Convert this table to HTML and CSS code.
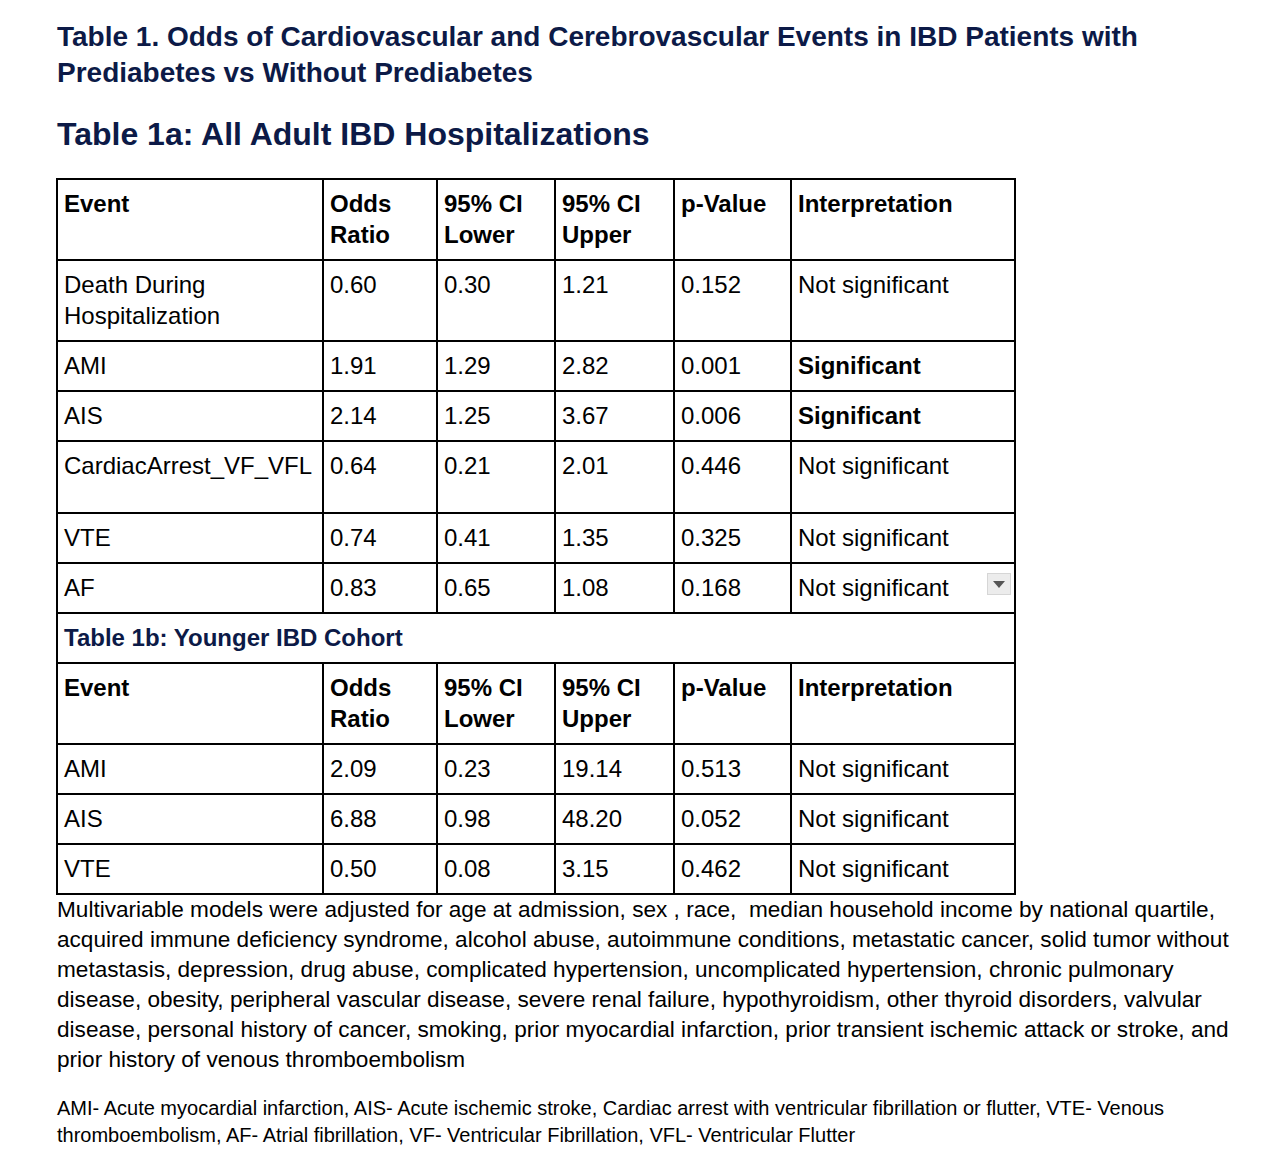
FILE: index.html
```
<!DOCTYPE html>
<html lang="en">
<head>
<meta charset="utf-8">
<title>Table 1</title>
<link rel="stylesheet" href="styles.css">
</head>
<body>
<div class="page">
  <h1 class="title">Table 1. Odds of Cardiovascular and Cerebrovascular Events in IBD Patients with Prediabetes vs Without Prediabetes</h1>
  <h2 class="subtitle">Table 1a: All Adult IBD Hospitalizations</h2>
  <div class="table-wrap">
    <table class="data">
      <colgroup>
        <col class="c1"><col class="c2"><col class="c3"><col class="c4"><col class="c5"><col class="c6">
      </colgroup>
      <tr class="head">
        <th>Event</th><th>Odds Ratio</th><th>95% CI Lower</th><th>95% CI Upper</th><th>p-Value</th><th>Interpretation</th>
      </tr>
      <tr><td>Death During Hospitalization</td><td>0.60</td><td>0.30</td><td>1.21</td><td>0.152</td><td>Not significant</td></tr>
      <tr><td>AMI</td><td>1.91</td><td>1.29</td><td>2.82</td><td>0.001</td><td class="sig">Significant</td></tr>
      <tr><td>AIS</td><td>2.14</td><td>1.25</td><td>3.67</td><td>0.006</td><td class="sig">Significant</td></tr>
      <tr class="tall"><td>CardiacArrest_VF_VFL</td><td>0.64</td><td>0.21</td><td>2.01</td><td>0.446</td><td>Not significant</td></tr>
      <tr><td>VTE</td><td>0.74</td><td>0.41</td><td>1.35</td><td>0.325</td><td>Not significant</td></tr>
      <tr><td>AF</td><td>0.83</td><td>0.65</td><td>1.08</td><td>0.168</td><td class="dd-cell">Not significant<span class="dd"><svg width="12" height="7" viewBox="0 0 12 7"><path d="M0 0H12L6 7Z" fill="#555"/></svg></span></td></tr>
      <tr class="section"><td colspan="6">Table 1b: Younger IBD Cohort</td></tr>
      <tr class="head">
        <th>Event</th><th>Odds Ratio</th><th>95% CI Lower</th><th>95% CI Upper</th><th>p-Value</th><th>Interpretation</th>
      </tr>
      <tr><td>AMI</td><td>2.09</td><td>0.23</td><td>19.14</td><td>0.513</td><td>Not significant</td></tr>
      <tr><td>AIS</td><td>6.88</td><td>0.98</td><td>48.20</td><td>0.052</td><td>Not significant</td></tr>
      <tr><td>VTE</td><td>0.50</td><td>0.08</td><td>3.15</td><td>0.462</td><td>Not significant</td></tr>
    </table>
  </div>
  <p class="notes">Multivariable models were adjusted for age at admission, sex , race,&nbsp; median household income by national quartile, acquired immune deficiency syndrome, alcohol abuse, autoimmune conditions, metastatic cancer, solid tumor without metastasis, depression, drug abuse, complicated hypertension, uncomplicated hypertension, chronic pulmonary disease, obesity, peripheral vascular disease, severe renal failure, hypothyroidism, other thyroid disorders, valvular disease, personal history of cancer, smoking, prior myocardial infarction, prior transient ischemic attack or stroke, and prior history of venous thromboembolism</p>
  <p class="abbr">AMI- Acute myocardial infarction, AIS- Acute ischemic stroke, Cardiac arrest with ventricular fibrillation or flutter, VTE- Venous thromboembolism, AF- Atrial fibrillation, VF- Ventricular Fibrillation, VFL- Ventricular Flutter</p>
</div>
</body>
</html>
```
FILE: styles.css
```
html, body {
  margin: 0;
  padding: 0;
  background: #ffffff;
}
body {
  font-family: "Liberation Sans", Arial, Helvetica, sans-serif;
  color: #000;
}
.page {
  padding: 19px 20px 0 57px;
  width: 1185px;
}
.title {
  margin: 0;
  font-size: 28px;
  line-height: 36px;
  font-weight: bold;
  color: #0c1a47;
  width: 1130px;
}
.subtitle {
  margin: 23px 0 0 0;
  font-size: 32px;
  line-height: 40px;
  font-weight: bold;
  color: #0c1a47;
}
.table-wrap {
  margin: 24px 0 0 -1px;
}
.data {
  border-collapse: collapse;
  font-size: 24px;
  line-height: 31px;
  width: 958px;
  table-layout: fixed;
}
.c1 { width: 266px; }
.c2 { width: 114px; }
.c3 { width: 118px; }
.c4 { width: 119px; }
.c5 { width: 117px; }
.c6 { width: 224px; }
.data th, .data td {
  border: 2px solid #000;
  padding: 8px 6px 9px 6px;
  text-align: left;
  vertical-align: top;
}
.data th {
  font-weight: bold;
}
.data .sig {
  font-weight: bold;
}
.data tr.tall td {
  height: 53px;
}
.data tr.section td {
  font-weight: bold;
  color: #0c1a47;
}
.dd-cell {
  position: relative;
}
.dd {
  position: absolute;
  right: 3px;
  top: 9px;
  width: 24px;
  height: 22px;
  background: #ececec;
  border: 1px solid #d6d6d6;
  box-sizing: border-box;
  display: flex;
  align-items: center;
  justify-content: center;
}
.notes {
  margin: 0;
  font-size: 22.6px;
  line-height: 30px;
}
.abbr {
  margin: 20px 0 0 0;
  font-size: 20px;
  line-height: 27px;
}
```
